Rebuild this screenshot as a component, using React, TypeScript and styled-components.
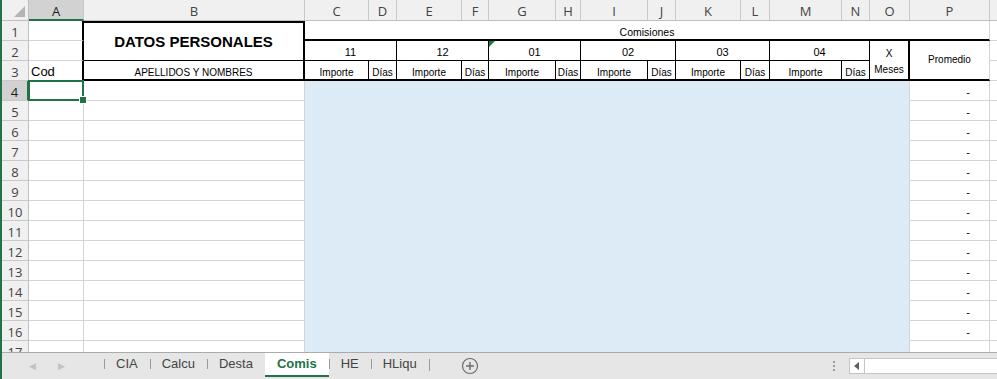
import React from 'react';
import styled, { createGlobalStyle, css } from 'styled-components';

const GlobalStyle = createGlobalStyle`
  html, body {
    margin: 0;
    padding: 0;
    background: #ffffff;
  }
  * {
    box-sizing: border-box;
  }
`;

const GRID = '#d4d4d4';
const GREEN = '#217346';
const FILL = '#ddebf7';

const colWidths = [27, 55, 221, 64, 28, 65, 27, 67, 25, 67, 28, 65, 29, 72, 28, 40, 80, 20];
const letters = ['A', 'B', 'C', 'D', 'E', 'F', 'G', 'H', 'I', 'J', 'K', 'L', 'M', 'N', 'O', 'P', ''];

const Window = styled.div`
  width: 997px;
  height: 379px;
  display: flex;
  flex-direction: column;
  border-left: 2px solid ${GREEN};
  overflow: hidden;
  font-family: 'Liberation Sans', Arial, sans-serif;
`;

const Sheet = styled.div`
  height: 352px;
  overflow: hidden;
  display: grid;
  grid-template-columns: ${colWidths.map((w) => `${w}px`).join(' ')};
  grid-template-rows: 21px repeat(17, 20px);
  background: #ffffff;
`;

const Corner = styled.div`
  grid-column: 1;
  grid-row: 1;
  background: #f0f0f0;
  border-right: 1px solid #bfbfbf;
  border-bottom: 1px solid #bfbfbf;
  display: flex;
  align-items: flex-end;
  justify-content: flex-end;
  padding: 0 3px 3px 0;
`;

const ColHead = styled.div<{ $col: number; $active?: boolean }>`
  grid-column: ${({ $col }) => $col};
  grid-row: 1;
  background: ${({ $active }) => ($active ? '#d2d2d2' : '#f0f0f0')};
  border-right: 1px solid #c8c8c8;
  border-bottom: ${({ $active }) => ($active ? `2px solid ${GREEN}` : '1px solid #bfbfbf')};
  color: ${({ $active }) => ($active ? '#1e1e1e' : '#444444')};
  font-family: 'Open Sans', 'Liberation Sans', sans-serif;
  font-size: 13px;
  display: flex;
  align-items: center;
  justify-content: center;
  padding-top: 2px;
`;

const RowHead = styled.div<{ $row: number; $active?: boolean }>`
  grid-column: 1;
  grid-row: ${({ $row }) => $row + 1};
  background: ${({ $active }) => ($active ? '#d2d2d2' : '#f0f0f0')};
  border-right: ${({ $active }) => ($active ? `2px solid ${GREEN}` : '1px solid #bfbfbf')};
  border-bottom: 1px solid #c8c8c8;
  color: ${({ $active }) => ($active ? '#1e1e1e' : '#444444')};
  font-family: 'Open Sans', 'Liberation Sans', sans-serif;
  font-size: 13px;
  display: flex;
  align-items: center;
  justify-content: center;
  padding-top: 3px;
`;

type Edge = 'grid' | 'thin' | 'thick' | 'none' | 'fill';

const edge = (e: Edge = 'grid') => {
  if (e === 'thick') return '2px solid #000000';
  if (e === 'thin') return '1px solid #000000';
  if (e === 'none') return '1px solid transparent';
  if (e === 'fill') return `1px solid ${FILL}`;
  return `1px solid ${GRID}`;
};

interface CellProps {
  $col: number;
  $row: number;
  $cs?: number;
  $rs?: number;
  $right?: Edge;
  $bottom?: Edge;
  $top?: Edge;
  $align?: 'left' | 'center' | 'right';
  $middle?: boolean;
  $lh?: number;
  $bold?: boolean;
  $size?: number;
  $fill?: string;
  $sel?: boolean;
}

const Cell = styled.div<CellProps>`
  position: relative;
  grid-column: ${({ $col, $cs = 1 }) => `${$col + 1} / span ${$cs}`};
  grid-row: ${({ $row, $rs = 1 }) => `${$row + 1} / span ${$rs}`};
  background: ${({ $fill }) => $fill || '#ffffff'};
  border-right: ${({ $right }) => edge($right)};
  border-bottom: ${({ $bottom }) => edge($bottom)};
  ${({ $top }) =>
    $top &&
    css`
      border-top: ${edge($top)};
    `}
  display: flex;
  align-items: ${({ $middle }) => ($middle ? 'center' : 'flex-end')};
  justify-content: ${({ $align }) =>
    $align === 'left' ? 'flex-start' : $align === 'right' ? 'flex-end' : 'center'};
  padding: ${({ $align, $middle }) =>
    `${$middle ? 1 : 0}px ${$align === 'right' ? 19 : 2}px ${$middle ? 0 : 1}px 2px`};
  font-size: ${({ $size }) => $size || 11}px;
  font-weight: ${({ $bold }) => ($bold ? 700 : 400)};
  color: #000000;
  line-height: ${({ $lh }) => $lh || 1.05};
  text-align: center;
  white-space: pre-line;
  ${({ $sel }) =>
    $sel &&
    css`
      &::after {
        content: '';
        position: absolute;
        left: -1px;
        top: -1px;
        right: -1px;
        bottom: -1px;
        border: 2px solid ${GREEN};
      }
      &::before {
        content: '';
        position: absolute;
        right: -4px;
        bottom: -4px;
        width: 6px;
        height: 6px;
        background: ${GREEN};
        border: 1px solid #ffffff;
        z-index: 2;
      }
    `}
`;

const ErrorMark = styled.span`
  position: absolute;
  left: 0;
  top: 0;
  width: 0;
  height: 0;
  border-top: 6px solid #1e7d3a;
  border-right: 6px solid transparent;
`;

const TabBar = styled.div`
  flex: 1;
  display: flex;
  align-items: stretch;
  background: #e6e6e6;
  border-top: 1px solid #ababab;
  font-family: 'Liberation Sans', Arial, sans-serif;
`;

const NavArrows = styled.div`
  width: 102px;
  display: flex;
  align-items: center;
  padding-left: 27px;
  gap: 22px;
  color: #c2c2c2;
  font-size: 9px;
`;

const Tab = styled.div<{ $active?: boolean }>`
  display: flex;
  align-items: center;
  padding: 0 12px 2px;
  font-size: 13px;
  position: relative;
  color: ${({ $active }) => ($active ? GREEN : '#444444')};
  font-weight: ${({ $active }) => ($active ? 700 : 400)};
  background: ${({ $active }) => ($active ? '#ffffff' : 'transparent')};
  border-bottom: 2px solid ${({ $active }) => ($active ? GREEN : 'transparent')};
  margin-bottom: 2px;
  ${({ $active }) =>
    !$active &&
    css`
      &::before {
        content: '';
        position: absolute;
        left: 0;
        top: 6px;
        bottom: 6px;
        border-left: 1px solid #9a9a9a;
      }
    `}
`;

const TabEnd = styled.div`
  width: 1px;
  margin: 6px 0 8px;
  background: #9a9a9a;
`;

const AddSheet = styled.div`
  margin-left: 31px;
  display: flex;
  align-items: center;
`;

const Spacer = styled.div`
  flex: 1;
`;

const Dots = styled.div`
  display: flex;
  flex-direction: column;
  justify-content: center;
  gap: 2px;
  margin-right: 14px;
  span {
    width: 2px;
    height: 2px;
    background: #9a9a9a;
  }
`;

const HScroll = styled.div`
  width: 148px;
  margin: 5px 0;
  display: flex;
  background: #ffffff;
  border: 1px solid #c4c4c4;
  border-right: none;
`;

const ScrollBtn = styled.div`
  width: 15px;
  display: flex;
  align-items: center;
  justify-content: center;
  border-right: 1px solid #c4c4c4;
  background: #ffffff;
`;

const months = ['11', '12', '01', '02', '03', '04'];
const tabs = ['CIA', 'Calcu', 'Desta', 'Comis', 'HE', 'HLiqu'];

export default function App() {
  const dataRows = Array.from({ length: 14 }, (_, i) => i + 4);

  return (
    <>
      <GlobalStyle />
      <Window>
        <Sheet>
          <Corner>
            <svg width="11" height="11" viewBox="0 0 11 11">
              <polygon points="11,0 11,11 0,11" fill="#b4b4b4" />
            </svg>
          </Corner>
          {letters.map((l, i) => (
            <ColHead key={i} $col={i + 2} $active={l === 'A'}>
              {l}
            </ColHead>
          ))}
          {Array.from({ length: 17 }, (_, i) => (
            <RowHead key={i} $row={i + 1} $active={i + 1 === 4}>
              {i + 1}
            </RowHead>
          ))}

          {/* header block, rows 1-3 */}
          <Cell $col={1} $row={1} $right="thick" />
          <Cell $col={1} $row={2} $right="thick" />
          <Cell $col={1} $row={3} $right="thick" $bottom="none" $align="left" $size={13}>
            Cod
          </Cell>
          <Cell
            $col={2}
            $row={1}
            $rs={2}
            $top="thick"
            $right="thick"
            $bottom="thin"
            $middle
            $bold
            $size={15}
          >
            DATOS PERSONALES
          </Cell>
          <Cell $col={2} $row={3} $right="thick" $bottom="thick" $size={10}>
            APELLIDOS Y NOMBRES
          </Cell>
          <Cell $col={3} $row={1} $cs={14} $bottom="thick" $right="grid" $size={10.5}>
            Comisiones
          </Cell>
          {months.map((m, i) => (
            <Cell key={m} $col={3 + i * 2} $row={2} $cs={2} $right="thin" $bottom="thin" $size={11}>
              {m === '01' && <ErrorMark />}
              {m}
            </Cell>
          ))}
          {months.map((m, i) => (
            <React.Fragment key={`h${m}`}>
              <Cell $col={3 + i * 2} $row={3} $right="thin" $bottom="thick" $size={10}>
                Importe
              </Cell>
              <Cell $col={4 + i * 2} $row={3} $right="thin" $bottom="thick" $size={10}>
                Días
              </Cell>
            </React.Fragment>
          ))}
          <Cell $col={15} $row={2} $rs={2} $right="thick" $bottom="thick" $size={10} $lh={1.6}>
            {'X\nMeses'}
          </Cell>
          <Cell $col={16} $row={2} $rs={2} $right="grid" $bottom="thick" $middle $size={10}>
            Promedio
          </Cell>
          <Cell $col={17} $row={1} />
          <Cell $col={17} $row={2} />
          <Cell $col={17} $row={3} />

          {/* data rows */}
          {dataRows.map((r) => (
            <React.Fragment key={r}>
              <Cell $col={1} $row={r} $sel={r === 4} />
              <Cell $col={2} $row={r} />
              {Array.from({ length: 13 }, (_, c) => (
                <Cell
                  key={c}
                  $col={3 + c}
                  $row={r}
                  $fill={FILL}
                  $right={c === 12 ? 'grid' : 'fill'}
                  $bottom="fill"
                />
              ))}
              <Cell $col={16} $row={r} $align="right" $size={11}>
                {r < 17 ? '-' : ''}
              </Cell>
              <Cell $col={17} $row={r} />
            </React.Fragment>
          ))}
        </Sheet>

        <TabBar>
          <NavArrows>
            <span>◀</span>
            <span>▶</span>
          </NavArrows>
          {tabs.map((t) => (
            <Tab key={t} $active={t === 'Comis'}>
              {t}
            </Tab>
          ))}
          <TabEnd />
          <AddSheet>
            <svg width="18" height="18" viewBox="0 0 18 18">
              <circle cx="9" cy="9" r="7.5" fill="none" stroke="#6b6b6b" strokeWidth="1.2" />
              <path d="M9 5v8M5 9h8" stroke="#6b6b6b" strokeWidth="1.4" />
            </svg>
          </AddSheet>
          <Spacer />
          <Dots>
            <span />
            <span />
            <span />
          </Dots>
          <HScroll>
            <ScrollBtn>
              <svg width="6" height="8" viewBox="0 0 6 8">
                <polygon points="5,0 5,8 0,4" fill="#606060" />
              </svg>
            </ScrollBtn>
          </HScroll>
        </TabBar>
      </Window>
    </>
  );
}
